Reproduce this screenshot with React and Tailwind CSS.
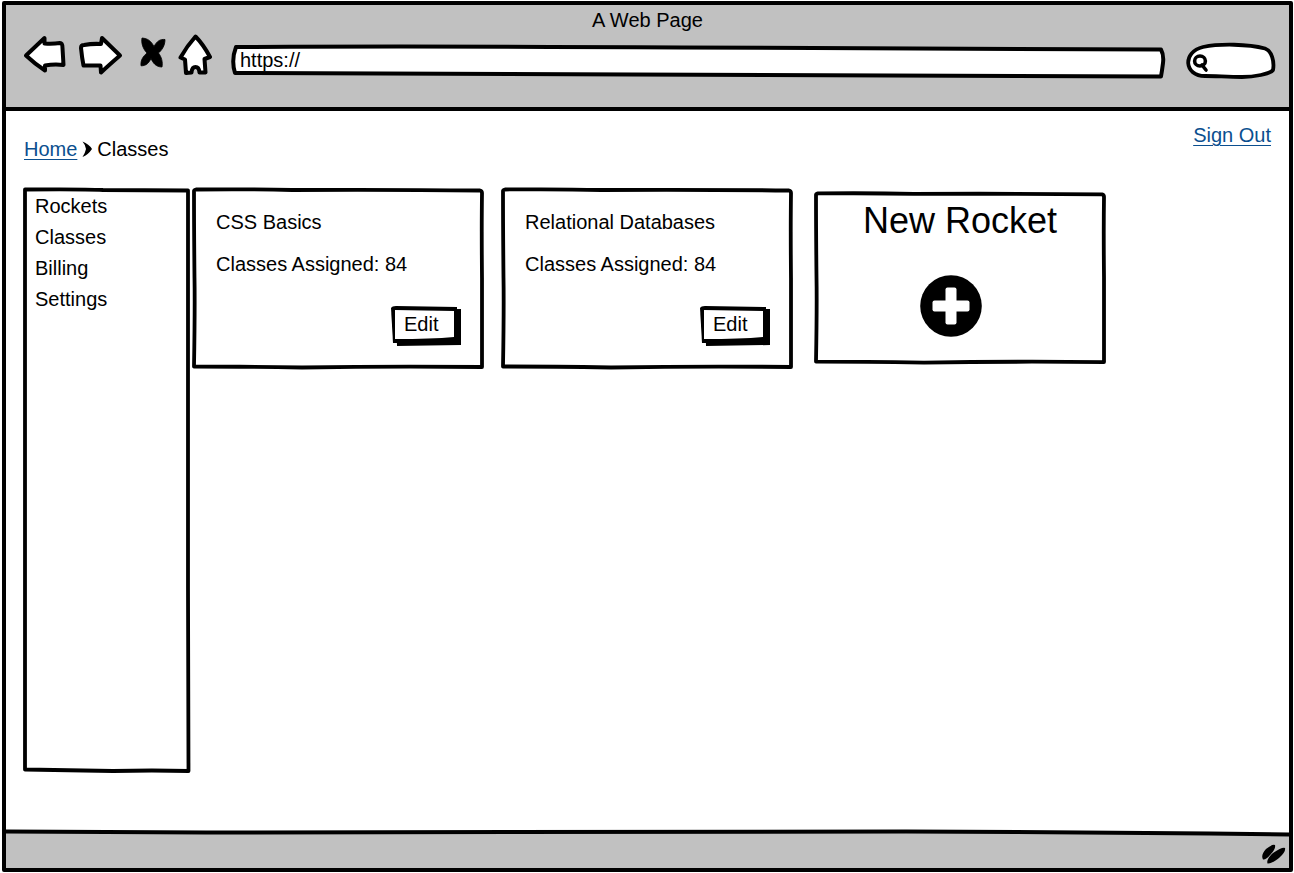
import React from 'react';

const ink = {
  stroke: '#000',
  strokeWidth: 4,
  strokeLinejoin: 'round',
  strokeLinecap: 'round',
};

/* Hand-drawn outline that stretches over whatever box holds it. */
function Sketch({ viewBox, children }) {
  return (
    <svg
      className="pointer-events-none absolute inset-0 h-full w-full overflow-visible"
      viewBox={viewBox}
      preserveAspectRatio="none"
      aria-hidden="true"
    >
      {children}
    </svg>
  );
}

function CardFrame() {
  return (
    <Sketch viewBox="0 0 292 181">
      <path
        d="M2 3 Q2 2 4 1.5 Q60 1 100 2 Q200 1.5 288 2.5 Q290 3 290 5 Q289.5 40 290 90 Q290 140 290 179 Q200 178 110 179.5 Q50 178.500 2 178.500 Q3 120 2.500 90 Q2 40 2 3Z"
        fill="none"
        {...ink}
        strokeWidth="3.800"
        vectorEffect="non-scaling-stroke"
      />
    </Sketch>
  );
}

function ClassCard({ title, assigned }) {
  return (
    <article className="relative w-[292px] pt-5 pr-[23px] pb-[23px] pl-6">
      <CardFrame />
      <h2>{title}</h2>
      <p className="mt-[14px]">Classes Assigned: {assigned}</p>
      <div className="mt-7 flex justify-end">
        <button type="button" className="relative h-10 w-[70px] pb-1 pl-[13px] text-left">
          <Sketch viewBox="0 0 70 40">
            <path d="M5 4 L70 3 L70 39 L6 40 Z" fill="#000" />
            <path d="M0 2 Q1 0 5 0 L66 1 L66 37 L2 37 Z" fill="#000" />
            <path d="M4 4 L63 5 L63 31 Q40 33 4 33 Z" fill="#fff" />
          </Sketch>
          <span className="relative">Edit</span>
        </button>
      </div>
    </article>
  );
}

function Toolbar() {
  return (
    <div className="flex h-11 items-start gap-3 pr-[13px] pl-[18px]">
      <button type="button" aria-label="Back" className="shrink-0">
        <svg width="43" height="44" viewBox="24 34 43 44" fill="#fff" {...ink}>
          <path d="M26 55.5 L44.5 38 L44.5 43.5 Q53 44 60 43 Q62.500 43 62.500 48 L63.500 65 Q54 64 45 65.500 L45 70.500 Q35 64 26 55.500Z" />
        </svg>
      </button>
      <button type="button" aria-label="Forward" className="shrink-0">
        <svg width="45" height="44" viewBox="79 34 45 44" fill="#fff" {...ink}>
          <path d="M81 48 Q81 45 84 45 Q92 43.500 101 44 L102 38 L120 55.500 Q109 65 101 72.500 L100.500 65.500 L83.500 65.500 Q82 58 81 48Z" />
        </svg>
      </button>
      <button type="button" aria-label="Stop" className="shrink-0">
        <svg width="30" height="44" viewBox="136 34 30 44" fill="#000">
          <path d="M142 38 C148 38.500 151 41 154 46.500 C157 41 160 39 165 39.500 C165 46 161.500 50.500 158.500 53 C161.500 57 163 62 162 67 C156 67 153 63 151 58.500 C149 63 146 66 141 65.800 C140.500 60 143 56.500 147 53 C143 49 141 43 142 38Z" stroke="#000" strokeWidth="0.800" />
        </svg>
      </button>
      <button type="button" aria-label="Home" className="shrink-0">
        <svg width="41" height="44" viewBox="178 34 41 44" fill="#fff" {...ink}>
          <path d="M195.500 36.500 Q203 44 210 57 L204.500 59 L205.500 72.500 L199.500 72.500 Q199 67 195.500 67 Q192 67 191.500 72.500 L186 73 L185 59.500 L180.500 57.500 Q187 46 195.500 36.500Z" />
        </svg>
      </button>
      <div className="relative mt-[11px] h-[33px] min-w-0 flex-1">
        <Sketch viewBox="0 0 932 33">
          <path
            d="M5 2 Q200 1 450 2.500 Q700 3 929 4.500 Q932 10 931 18 Q930 26 929 31.500 Q700 31.500 400 29.500 Q200 28.500 4 28 Q0 15 5 2Z"
            fill="#fff"
            {...ink}
            strokeWidth="4"
            vectorEffect="non-scaling-stroke"
          />
        </Sketch>
        <input
          type="text"
          aria-label="Address"
          defaultValue="https://"
          className="relative block h-[30px] w-full bg-transparent px-[9px] outline-none"
        />
      </div>
      <div className="relative ml-[10px] mt-2 h-9 w-[90px] shrink-0">
        <Sketch viewBox="1186 42 90 36">
          <path
            d="M1205 76 C1184 76 1182 52 1203 47 C1220 43.500 1248 44 1265 48.500 C1272 51 1274.500 62 1273 70 C1270 74 1254 77 1242 77 C1228 77 1216 76 1205 76Z"
            fill="#fff"
            {...ink}
            strokeWidth="3.800"
          />
          <ellipse cx="1200" cy="61" rx="5.400" ry="5" fill="none" {...ink} strokeWidth="3.600" />
          <path d="M1202 65 L1206 70" fill="none" {...ink} strokeWidth="3.600" />
        </Sketch>
        <input
          type="search"
          aria-label="Search"
          className="relative block h-9 w-full bg-transparent pr-3 pl-6 outline-none"
        />
      </div>
    </div>
  );
}

export default function App() {
  return (
    <div className="flex min-h-screen flex-col bg-white py-px pr-px pl-[2px] font-['Liberation_Sans',Arial,sans-serif] text-[20px] leading-[28px] text-black">
      <div className="flex flex-1 flex-col rounded-[2px] border-4 border-black">
        <header className="h-[106px] shrink-0 border-b-4 border-black bg-[#c1c1c1] pt-px">
          <p className="text-center">A Web Page</p>
          <Toolbar />
        </header>

        <main className="flex flex-1 flex-col pr-[18px] pb-[60px] pl-[17px]">
          <div className="flex h-[77px] shrink-0 items-start justify-between pt-[10px] pl-px">
            <nav aria-label="Breadcrumb" className="mt-[14px] flex items-center gap-1">
              <a href="#home" className="text-[#0b4f8f] underline decoration-1 underline-offset-[3px]">
                Home
              </a>
              <svg width="12" height="16" viewBox="0 0 12 16" aria-hidden="true">
                <path d="M1.500 0.500 Q8 3 11 8 Q7 14 1.500 16 Q4.500 11 5 8 Q4.500 4 1.500 0.500Z" fill="#000" />
              </svg>
              <span>Classes</span>
            </nav>
            <a href="#sign-out" className="text-[#0b4f8f] underline decoration-1 underline-offset-[3px]">
              Sign Out
            </a>
          </div>

          <div className="flex flex-1 items-stretch gap-[2px]">
            <aside className="relative w-[167px] shrink-0 pt-[3px] pl-3">
              <Sketch viewBox="0 0 167 584">
                <path
                  d="M2 1.500 Q60 1 80 2 Q120 2 165 2.500 Q164.500 200 165 400 L165.500 583 Q130 582 90 583 Q45 582 2 581.500 Q3 300 2 1.500Z"
                  fill="none"
                  {...ink}
                  strokeWidth="3.800"
                  vectorEffect="non-scaling-stroke"
                />
              </Sketch>
              <nav aria-label="Main">
                <ul className="relative leading-[31px]">
                  <li><a href="#rockets">Rockets</a></li>
                  <li><a href="#classes">Classes</a></li>
                  <li><a href="#billing">Billing</a></li>
                  <li><a href="#settings">Settings</a></li>
                </ul>
              </nav>
            </aside>

            <section className="flex flex-1 flex-wrap content-start items-start gap-[17px]">
              <ClassCard title="CSS Basics" assigned={84} />
              <ClassCard title="Relational Databases" assigned={84} />
              <article className="relative mt-1 ml-1 w-[292px] pt-[7px] pb-[27px]">
                <CardFrame />
                <h2 className="text-center text-[36px] leading-[44px]">New Rocket</h2>
                <button type="button" aria-label="Add new rocket" className="relative mt-8 ml-[106px] block">
                  <svg width="62" height="62" viewBox="0 0 62 62">
                    <circle cx="31" cy="31" r="30.800" fill="#000" />
                    <rect x="12.500" y="25.500" width="37" height="11" rx="2" fill="#fff" />
                    <rect x="25.500" y="12.500" width="11" height="37" rx="2" fill="#fff" />
                  </svg>
                </button>
              </article>
            </section>
          </div>
        </main>

        <footer className="relative flex h-9 shrink-0 items-end justify-end bg-[#c1c1c1] pr-[3px] pb-1">
          <Sketch viewBox="0 0 1283 36">
            <path d="M0 0 Q80 0 200 0.500 Q600 0 900 -0.500 Q1100 0 1283 2.500 L1283 -5 L0 -5Z" fill="#fff" />
            <path
              d="M0 -0.500 Q80 0 200 0.500 Q600 0 900 -0.500 Q1100 0 1283 2.500"
              fill="none"
              {...ink}
              vectorEffect="non-scaling-stroke"
            />
          </Sketch>
          <svg className="relative" width="25" height="20" viewBox="1262 845 25 20" aria-hidden="true">
            <path d="M1264 860.500 Q1261.500 856 1267 850 Q1273 845 1276 846 Q1277 850 1271.500 855.500 Q1267 861 1264 860.500Z" fill="#000" />
            <path d="M1268.500 864.500 Q1267 860 1274 854 Q1283 848 1286 849 Q1287 853 1280 859 Q1272 865 1268.500 864.500Z" fill="#000" />
          </svg>
        </footer>
      </div>
    </div>
  );
}
